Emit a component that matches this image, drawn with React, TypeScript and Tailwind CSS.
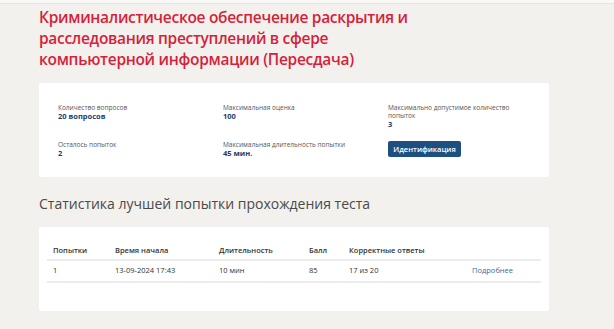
import React from "react";

const font = { fontFamily: '"Open Sans", "Noto Sans", sans-serif' };

function Field({ label, value }: { label: React.ReactNode; value: string }) {
  return (
    <div className="flex flex-col">
      <div className="text-[6.5px] leading-[8px] text-[#555]">{label}</div>
      <div className="text-[7.5px] leading-[8px] font-bold text-[#203f6c]">{value}</div>
    </div>
  );
}

export default function App() {
  const cols = [
    { h: "Попытки", v: "1", w: "w-[62px]" },
    { h: "Время начала", v: "13-09-2024 17:43", w: "w-[104px]" },
    { h: "Длительность", v: "10 мин", w: "w-[90px]" },
    { h: "Балл", v: "85", w: "w-[40px]" },
    { h: "Корректные ответы", v: "17 из 20", w: "w-[123px]" },
  ];
  return (
    <div className="min-h-[329px] w-[614px] bg-[#f2f1ee]" style={font}>
      <div className="h-[4px] bg-[#f8f8f7] border-b border-[#e6e5e2]" />
      <div className="pl-[39px] w-[549px]">
        <h1 className="mt-[3px] text-[15.5px] leading-[21px] font-semibold tracking-[-0.3px] text-[#d61f3a]">
          Криминалистическое обеспечение раскрытия и
          <br />
          расследования преступлений в сфере
          <br />
          компьютерной информации (Пересдача)
        </h1>

        <div className="mt-[13px] bg-white rounded-[2px] pt-[21px] pb-[20px] pl-[19px]">
          <div className="grid grid-cols-[165px_165px_auto] gap-y-[13px]">
            <Field label="Количество вопросов" value="20 вопросов" />
            <Field label="Максимальная оценка" value="100" />
            <Field
              label={
                <>
                  Максимально допустимое количество
                  <br />
                  попыток
                </>
              }
              value="3"
            />
            <Field label="Осталось попыток" value="2" />
            <Field label="Максимальная длительность попытки" value="45 мин." />
            <div className="flex items-start">
              <button className="block h-[16px] w-[73px] rounded-[2px] bg-[#1d4f80] text-white text-[7.5px] font-semibold leading-[16px]">
                Идентификация
              </button>
            </div>
          </div>
        </div>

        <h2 className="mt-[18px] text-[14px] leading-[18px] text-[#4a4a4a]">
          Статистика лучшей попытки прохождения теста
        </h2>

        <div className="mt-[14px] bg-white rounded-[2px] px-[8px] pt-[16px] pb-[28px]">
          <table className="w-full border-collapse text-[7.5px] text-[#333]">
            <thead>
              <tr className="border-b-2 border-[#ececec]">
                {cols.map((c) => (
                  <th key={c.h} className={`${c.w} h-[17px] px-[6px] text-left font-semibold`}>
                    {c.h}
                  </th>
                ))}
                <th className="h-[17px]" />
              </tr>
            </thead>
            <tbody>
              <tr className="border-b-2 border-[#ececec]">
                {cols.map((c) => (
                  <td key={c.h} className="h-[22px] px-[6px] text-left">
                    {c.v}
                  </td>
                ))}
                <td className="h-[22px] px-[6px] text-[#3d6c9e]">Подробнее</td>
              </tr>
            </tbody>
          </table>
        </div>
      </div>
    </div>
  );
}
